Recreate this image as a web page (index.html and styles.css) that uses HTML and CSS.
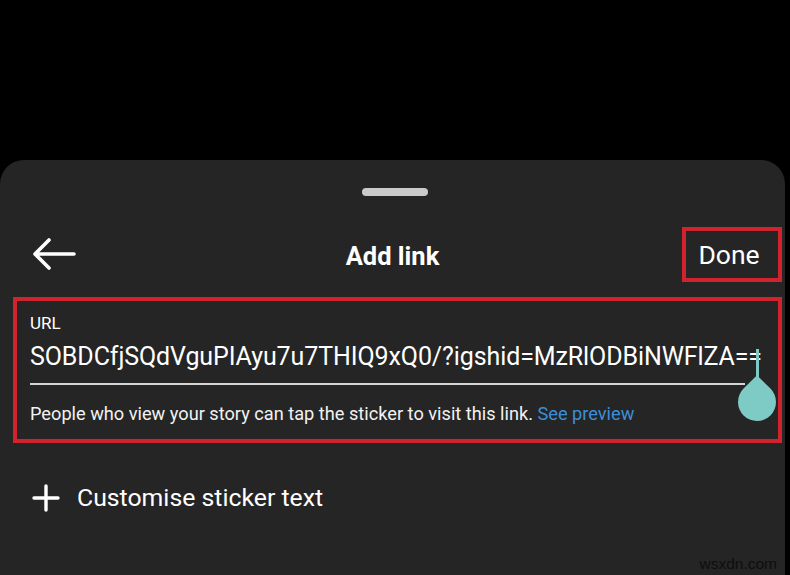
FILE: index.html
```html
<!DOCTYPE html>
<html>
<head>
<meta charset="utf-8">
<link rel="stylesheet" href="styles.css">
</head>
<body>
<div class="sheet">
  <div class="handle"></div>
  <div class="header">
    <svg class="back" width="44" height="34" viewBox="0 0 44 34"><path d="M42 17H4M17 3L3 17l14 14" fill="none" stroke="#fff" stroke-width="3.6" stroke-linecap="round" stroke-linejoin="round"/></svg>
    <div class="title">Add link</div>
    <div class="done">Done</div>
  </div>
  <div class="field">
    <div class="label">URL</div>
    <div class="input-row">
      <div class="url">SOBDCfjSQdVguPIAyu7u7THIQ9xQ0/?igshid=MzRlODBiNWFlZA==</div>
      <div class="cursor"></div>
      <div class="drop"></div>
    </div>
    <div class="help">People who view your story can tap the sticker to visit this link. <span class="link">See preview</span></div>
  </div>
  <div class="custom">
    <svg class="plus" width="28" height="28" viewBox="0 0 28 28"><path d="M14 2v24M2 14h24" stroke="#fff" stroke-width="3.4" stroke-linecap="round"/></svg>
    <span>Customise sticker text</span>
  </div>
  <div class="mark">wsxdn.com</div>
</div>
</body>
</html>
```

FILE: styles.css
```css
html, body {
  margin: 0;
  padding: 0;
  background: #000;
  height: 575px;
  overflow: hidden;
  font-family: Roboto, "Liberation Sans", sans-serif;
  color: #fff;
}
.sheet {
  margin-top: 160px;
  margin-right: 5px;
  height: 415px;
  background: #252525;
  border-radius: 24px 24px 0 0;
  position: relative;
  display: flex;
  flex-direction: column;
}
.handle {
  width: 66px;
  height: 8px;
  border-radius: 4px;
  background: #cacaca;
  margin: 28px auto 0;
  position: relative;
  left: 2px;
}
.header {
  display: flex;
  align-items: center;
  justify-content: space-between;
  height: 56px;
  margin-top: 30px;
  padding: 0 3px 0 32px;
}
.back { display: block; }
.title {
  font-size: 25.5px;
  font-weight: 700;
  position: absolute;
  left: 0;
  right: 0;
  top: 81px;
  text-align: center;
  pointer-events: none;
}
.done {
  font-size: 26.5px;
  box-sizing: border-box;
  width: 100px;
  height: 55px;
  border: 4px solid #d0232d;
  display: flex;
  align-items: center;
  justify-content: center;
  padding: 0 6px 0 0;
}
.field {
  margin: 15px 3px 0 13px;
  box-sizing: border-box;
  height: 146px;
  border: 4px solid #d0232d;
  padding: 13px 0 0 13px;
}
.label {
  font-size: 17px;
  line-height: 19px;
}
.input-row {
  position: relative;
  width: 715px;
  border-bottom: 2px solid #d4d4d4;
  height: 42px;
}
.url {
  font-size: 25px;
  line-height: 32px;
  margin-top: 8px;
  white-space: nowrap;
  letter-spacing: -0.1px;
}
.cursor {
  position: absolute;
  left: 726px;
  top: 8px;
  width: 3px;
  height: 38px;
  background: #7ecac4;
}
.drop {
  position: absolute;
  left: 708px;
  top: 42px;
  width: 38px;
  height: 38px;
  background: #7ecac4;
  border-radius: 0 50% 50% 50%;
  transform: rotate(45deg);
}
.help {
  font-size: 18.2px;
  margin-top: 18px;
  color: #f2f2f2;
}
.link { color: #3c8fd6; }
.custom {
  display: flex;
  align-items: center;
  margin: 40px 0 0 32px;
  font-size: 24.8px;
}
.plus { display: block; margin-right: 17px; }
.mark {
  position: absolute;
  right: 8px;
  bottom: 2px;
  font-size: 15.5px;
  color: #0e0e0e;
  font-family: "Liberation Sans", sans-serif;
}
```
